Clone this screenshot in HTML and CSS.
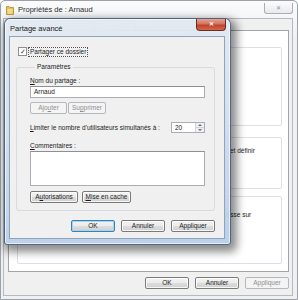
FILE: index.html
```html
<!DOCTYPE html>
<html lang="fr">
<head>
    <meta charset="UTF-8">
    <title>Propriétés de : Arnaud</title>
    <link rel="stylesheet" href="styles.css">
</head>
<body>

    <!-- Fenêtre de propriétés (arrière-plan) -->
    <div class="window">
        <div class="titlebar">
            <svg class="folder" width="8" height="10" viewBox="0 0 8 10">
                <path d="M0.5 1.5 L3 1.5 L3.8 2.5 L7.5 2.5 L7.5 9.5 L0.5 9.5 Z" fill="#e7c25a" stroke="#b58a26" stroke-width="0.8"/>
                <rect x="1.5" y="4" width="5" height="5" fill="#f6dc88"/>
            </svg>
            <span class="title">Propriétés de : Arnaud</span>
            <div class="close-back">✕</div>
        </div>
        <div class="client">
            <!-- Onglets (cachés derrière la boîte de dialogue) -->
            <div class="tabs">
                <span class="tab"></span>
                <span class="tab"></span>
                <span class="tab"></span>
            </div>
            <div class="page">
                <div class="group g1"></div>
                <div class="group g2">
                    <p class="line end1">et définir</p>
                </div>
                <div class="group g3">
                    <p class="line end2">passe sur</p>
                </div>
            </div>
            <div class="actions">
                <button class="btn">OK</button>
                <button class="btn">Annuler</button>
                <button class="btn" disabled>Appliquer</button>
            </div>
        </div>
    </div>

    <!-- Boîte de dialogue Partage avancé -->
    <div class="dialog">
        <div class="dialog-title">
            <span class="dialog-name">Partage avancé</span>
            <div class="close-red">✕</div>
        </div>
        <div class="dialog-client">
            <div class="check-row">
                <span class="checkbox">✓</span>
                <span class="check-label">Partager ce dossier</span>
            </div>

            <fieldset class="params">
                <legend>Paramètres</legend>
                <div class="label"><u>N</u>om du partage :</div>
                <div class="textbox">Arnaud</div>
                <div class="btn-row">
                    <button class="btn small w-ajouter" disabled>Ajo<u>u</u>ter</button>
                    <button class="btn small w-suppr" disabled>Su<u>p</u>primer</button>
                </div>
                <div class="limit-row">
                    <span class="label"><u>L</u>imiter le nombre d'utilisateurs simultanés à :</span>
                    <div class="spinner">
                        <span class="spin-value">20</span>
                        <div class="spin-btns">
                            <span class="spin-up"></span>
                            <span class="spin-down"></span>
                        </div>
                    </div>
                </div>
                <div class="label comments"><u>C</u>ommentaires :</div>
                <div class="textarea"></div>
                <div class="btn-row gap4">
                    <button class="btn small w-auto">A<u>u</u>torisations</button>
                    <button class="btn small w-cache"><u>M</u>ise en cache</button>
                </div>
            </fieldset>

            <div class="dialog-actions">
                <button class="btn default">OK</button>
                <button class="btn">Annuler</button>
                <button class="btn">Appliquer</button>
            </div>
        </div>
    </div>

</body>
</html>
```

FILE: styles.css
```css
/* Base */
body {
    margin: 0;
    background: #ffffff;
    font-family: "Liberation Sans", Arial, sans-serif;
    font-size: 6.5px;
    color: #1b1b1b;
}

button {
    font-family: inherit;
}

/* Fenêtre arrière */
.window {
    width: 298px;
    height: 300px;
    box-sizing: border-box;
    border: 1px solid #9aa1a9;
    border-radius: 5px 5px 0 0;
    background: linear-gradient(#fbfbfc, #eef0f2 40px, #eef0f2);
    padding: 0 4px 3px 2px;
    display: flex;
    flex-direction: column;
}

.titlebar {
    height: 17px;
    display: flex;
    align-items: center;
    padding-left: 3px;
}

.folder {
    margin-right: 4px;
}

.title {
    font-size: 7.5px;
    color: #2a2a2a;
    flex: 1;
}

.close-back {
    width: 27px;
    height: 10px;
    margin-bottom: 4px;
    align-self: flex-end;
    border: 1px solid #a9aeb4;
    border-top: none;
    border-radius: 0 0 3px 3px;
    background: linear-gradient(#fafafa, #e8eaec);
    color: #8b9096;
    font-size: 6px;
    text-align: center;
    line-height: 10px;
}

.client {
    flex: 1;
    border: 1px solid #b5bac0;
    background: #f0f0f0;
    display: flex;
    flex-direction: column;
}

.tabs {
    height: 11px;
    display: flex;
    align-items: flex-end;
    gap: 1px;
    padding-left: 4px;
}

.tab {
    width: 40px;
    height: 9px;
    border: 1px solid #b9bec4;
    border-bottom: none;
    border-radius: 2px 2px 0 0;
    background: #f4f5f6;
}

.page {
    height: 240px;
    margin: 0 3px 0 4px;
    border: 1px solid #a0a5ac;
    background: #ffffff;
    display: flex;
    flex-direction: column;
}

.group {
    margin: 0 6px 0 8px;
    border: 1px solid #dcdfe3;
    border-radius: 2px;
    box-sizing: border-box;
}

.g1 { margin-top: 16px; height: 79px; }
.g2 { margin-top: 11px; height: 52px; }
.g3 { margin-top: 7px; height: 68px; }

/* Fin de phrases visibles à droite de la boîte de dialogue */
.line {
    margin: 0;
    white-space: nowrap;
    line-height: 8px;
}

.end1 { margin-top: 9px; padding-left: 212px; }
.end2 { margin-top: 14px; padding-left: 205px; }

.actions {
    display: flex;
    justify-content: flex-end;
    gap: 6px;
    margin: 5px 3px 0 0;
}

/* Boutons style Windows 7 */
.btn {
    width: 44px;
    height: 12px;
    padding: 0;
    font-size: 6.5px;
    line-height: 10px;
    color: #1b1b1b;
    border: 1px solid #7a7a7a;
    border-radius: 2px;
    background: linear-gradient(#f4f4f4 0%, #ebebeb 48%, #dddddd 52%, #d0d0d0 100%);
    box-shadow: inset 0 0 0 1px rgba(255, 255, 255, 0.8);
}

.btn:disabled {
    color: #8e8e8e;
    border-color: #b4b8bc;
    background: #f4f4f4;
    box-shadow: none;
}

.btn.default {
    border-color: #3c7fb1;
    box-shadow: inset 0 0 0 1px #9fd5f5;
}

.btn u {
    text-decoration: underline;
}

/* Boîte de dialogue */
.dialog {
    position: absolute;
    left: 4px;
    top: 18px;
    width: 227px;
    height: 227px;
    box-sizing: border-box;
    border: 1px solid rgba(40, 62, 92, 0.75);
    border-radius: 6px 6px 3px 3px;
    background: linear-gradient(175deg, rgba(228, 234, 241, 0.96) 0%, rgba(212, 225, 239, 0.96) 40%, rgba(184, 207, 233, 0.97) 100%);
    box-shadow: 3px 4px 9px 3px rgba(0, 0, 0, 0.45), inset 0 0 0 1px rgba(255, 255, 255, 0.6);
    padding: 0 5px 5px 4px;
    display: flex;
    flex-direction: column;
}

.dialog-title {
    height: 17px;
    display: flex;
    align-items: flex-start;
}

.dialog-name {
    flex: 1;
    font-size: 7.5px;
    line-height: 8px;
    margin: 6px 0 0 1px;
    color: #1a1a1a;
}

.close-red {
    width: 28px;
    height: 11px;
    margin-right: -1px;
    border: 1px solid #6e2b22;
    border-top: none;
    border-radius: 0 0 4px 4px;
    background: linear-gradient(#e3a493 0%, #d2735e 45%, #c0412b 55%, #cf6a4a 100%);
    color: #ffffff;
    font-size: 6px;
    font-weight: bold;
    text-align: center;
    line-height: 11px;
}

.dialog-client {
    flex: 1;
    background: #f0f0f0;
    border: 1px solid #8ea4bd;
    box-sizing: border-box;
    padding: 10px 0 0 0;
    display: flex;
    flex-direction: column;
}

.check-row {
    height: 9px;
    display: flex;
    align-items: center;
    padding-left: 8px;
}

.checkbox {
    width: 7px;
    height: 7px;
    border: 1px solid #8e8f8f;
    background: #ffffff;
    font-size: 7px;
    line-height: 7px;
    text-align: center;
    color: #3a3a3a;
    margin-right: 2px;
}

.check-label {
    outline: 1px dotted #555;
    line-height: 8px;
    padding: 0 1px;
}

.params {
    margin: 7px 9px 0 6px;
    padding: 6px 9px 7px 13px;
    border: 1px solid #d5dbe1;
    border-radius: 3px;
    min-width: 0;
}

.params legend {
    padding: 0 2px;
    margin-left: 5px;
    line-height: 8px;
}

.label {
    line-height: 8px;
}

.textbox {
    margin-top: 1px;
    height: 12px;
    box-sizing: border-box;
    border: 1px solid #abadb3;
    border-top-color: #8c8f96;
    background: #ffffff;
    padding-left: 3px;
    line-height: 10px;
}

.btn-row {
    display: flex;
    gap: 1px;
    margin-top: 4px;
}

.btn-row.gap4 {
    gap: 4px;
    margin-top: 5px;
}

.btn.small { width: auto; }
.w-ajouter { width: 37px !important; }
.w-suppr { width: 38px !important; }
.w-auto { width: 48px !important; }
.w-cache { width: 49px !important; }

.limit-row {
    margin-top: 8px;
    height: 11px;
    display: flex;
    align-items: center;
    justify-content: space-between;
}

.spinner {
    width: 34px;
    height: 11px;
    box-sizing: border-box;
    border: 1px solid #abadb3;
    background: #ffffff;
    display: flex;
}

.spin-value {
    flex: 1;
    padding-left: 3px;
    line-height: 9px;
}

.spin-btns {
    width: 8px;
    display: flex;
    flex-direction: column;
    border-left: 1px solid #d0d3d7;
}

.spin-up,
.spin-down {
    flex: 1;
    background: #eef0f2;
    position: relative;
}

.spin-up { border-bottom: 1px solid #d0d3d7; }

.spin-up::after,
.spin-down::after {
    content: "";
    position: absolute;
    left: 2px;
    border-left: 2px solid transparent;
    border-right: 2px solid transparent;
}

.spin-up::after {
    top: 1px;
    border-bottom: 2px solid #6a6f75;
}

.spin-down::after {
    top: 1px;
    border-top: 2px solid #6a6f75;
}

.comments {
    margin-top: 9px;
}

.textarea {
    margin-top: 1px;
    height: 35px;
    box-sizing: border-box;
    border: 1px solid #abadb3;
    border-top-color: #8c8f96;
    background: #ffffff;
}

.dialog-actions {
    display: flex;
    justify-content: flex-end;
    gap: 6px;
    margin: 9px 9px 0 0;
}
```
